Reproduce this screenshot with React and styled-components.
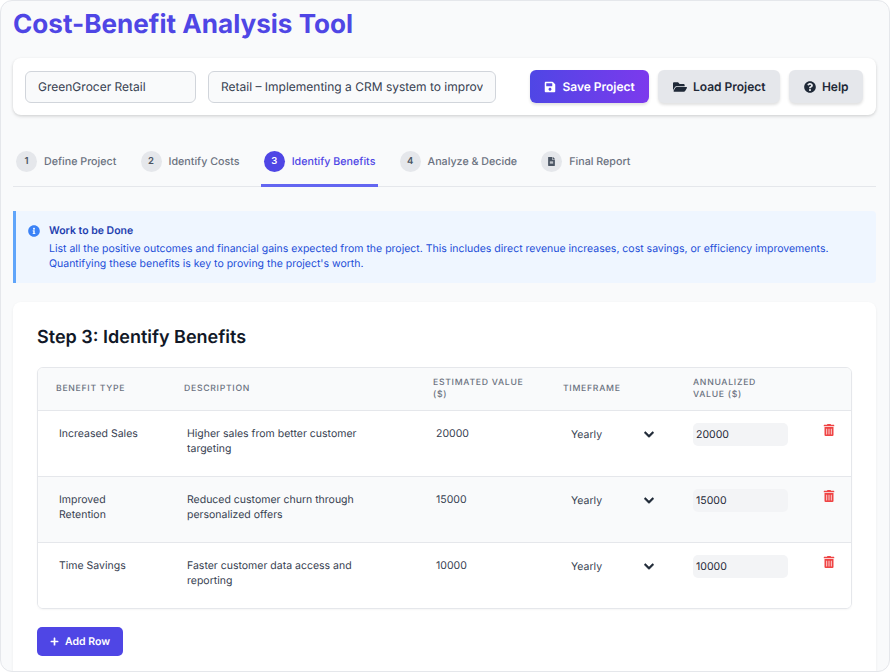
import React from 'react';
import styled, { createGlobalStyle } from 'styled-components';
import {
  FaSave,
  FaFolderOpen,
  FaQuestionCircle,
  FaFileAlt,
  FaInfoCircle,
  FaChevronDown,
  FaTrashAlt,
  FaPlus,
} from 'react-icons/fa';

const GlobalStyle = createGlobalStyle`
  * { box-sizing: border-box; text-rendering: geometricPrecision; }
  html, body { margin: 0; background: #fff; }
  body { font-family: Inter, "Liberation Sans", sans-serif; }
`;

const Frame = styled.div`
  width: 890px;
  height: 672px;
  overflow: hidden;
  background: #f9fafb;
  border: 1px solid #e5e7eb;
  border-radius: 12px;
  padding: 0 13px 0 12px;
`;

const Title = styled.h1`
  margin: 7px 0 17px;
  height: 33px;
  font-size: 26.1px;
  line-height: 33px;
  font-weight: 700;
  color: #4f46e5;
`;

const Toolbar = styled.div`
  display: flex;
  align-items: center;
  height: 57px;
  padding: 0 12px;
  background: #fff;
  border-radius: 8px;
  box-shadow: 0 1px 3px rgba(0, 0, 0, 0.12), 0 2px 4px rgba(0, 0, 0, 0.06);
`;

const ProjectInput = styled.input`
  flex: none;
  width: ${({ $width }) => $width}px;
  height: 32px;
  margin-right: 12px;
  padding: 0 12px;
  font: 400 12px Inter, sans-serif;
  color: #374151;
  background: #f9fafb;
  border: 1px solid #d1d5db;
  border-radius: 6px;
  outline: none;
`;

const Actions = styled.div`
  display: flex;
  flex: none;
  gap: 9px;
  margin-left: 22px;
`;

const Button = styled.button`
  display: flex;
  flex: none;
  align-items: center;
  gap: 6px;
  height: 33px;
  padding: 0 ${({ $primary }) => ($primary ? 14.4 : 14.7)}px;
  white-space: nowrap;
  font: 600 12px Inter, sans-serif;
  border: 0;
  border-radius: 6px;
  color: ${({ $primary }) => ($primary ? '#fff' : '#1f2937')};
  background: ${({ $primary }) =>
    $primary ? 'linear-gradient(90deg, #4f46e5, #7c3aed)' : '#e5e7eb'};
  box-shadow: 0 2px 3px rgba(0, 0, 0, 0.12);
`;

const Tabs = styled.nav`
  display: flex;
  height: 47px;
  margin-top: 25px;
  margin-bottom: 24px;
  border-bottom: 1px solid #e5e7eb;
`;

const Tab = styled.div`
  display: flex;
  align-items: center;
  gap: 7px;
  height: 47px;
  padding: 0 3px 1px;
  margin-right: 18.2px;
  font-size: 10.7px;
  font-weight: 500;
  color: ${({ $active }) => ($active ? '#4f46e5' : '#6b7280')};
  border-bottom: 3px solid ${({ $active }) => ($active ? '#6366f1' : 'transparent')};
`;

const StepDot = styled.span`
  display: flex;
  align-items: center;
  justify-content: center;
  width: 21px;
  height: 21px;
  border-radius: 50%;
  font-size: 9.5px;
  font-weight: 600;
  color: ${({ $active }) => ($active ? '#fff' : '#4b5563')};
  background: ${({ $active }) => ($active ? '#4f46e5' : '#e5e7eb')};
`;

const InfoBox = styled.div`
  display: flex;
  gap: 9px;
  height: 72px;
  padding: 13px 12px;
  background: #eff6ff;
  border-left: 3px solid #60a5fa;
  border-radius: 0 4px 4px 0;
`;

const InfoIcon = styled(FaInfoCircle)`
  flex: none;
  width: 12px;
  height: 12px;
  margin-top: 1px;
  color: #3b82f6;
`;

const InfoTitle = styled.div`
  font-size: 10.5px;
  line-height: 14px;
  font-weight: 600;
  color: #1e40af;
`;

const InfoText = styled.p`
  margin: 3px 0 0;
  font-size: 10.5px;
  line-height: 15px;
  color: #1d4ed8;
`;

const Card = styled.section`
  height: 400px;
  margin-top: 19px;
  padding: 24px;
  background: #fff;
  border-radius: 8px;
  box-shadow: 0 1px 3px rgba(0, 0, 0, 0.06);
`;

const CardTitle = styled.h2`
  margin: 0 0 18px;
  height: 23px;
  font-size: 18px;
  line-height: 23px;
  font-weight: 600;
  color: #111827;
`;

const TableWrap = styled.div`
  width: 815px;
  border: 1px solid #e5e7eb;
  border-radius: 6px;
  overflow: hidden;
  box-shadow: 0 1px 2px rgba(0, 0, 0, 0.04);
`;

const Table = styled.table`
  width: 100%;
  table-layout: fixed;
  border-collapse: separate;
  border-spacing: 0;
`;

const Th = styled.th`
  height: 43px;
  padding: 0 18px;
  font-size: 8.7px;
  line-height: 12px;
  font-weight: 500;
  letter-spacing: 0.7px;
  text-align: left;
  text-transform: uppercase;
  color: #6b7280;
  background: #f9fafb;
  border-bottom: 1px solid #e5e7eb;
`;

const Tr = styled.tr`
  background: ${({ $shaded }) => ($shaded ? '#f9fafb' : '#fff')};
  &:not(:last-child) td { border-bottom: 1px solid #e5e7eb; }
`;

const Td = styled.td`
  height: 66px;
  padding: 12px 18px;
  vertical-align: top;
  ${Tr}:last-child & { height: 65px; }
`;

const CellText = styled.textarea`
  display: block;
  width: 100%;
  height: 36px;
  padding: 3px;
  margin: 0;
  resize: none;
  overflow: hidden;
  font: 400 10.5px/15px Inter, sans-serif;
  color: #374151;
  background: transparent;
  border: 0;
  outline: none;
`;

const SelectWrap = styled.div`
  position: relative;
  width: 100px;
`;

const Select = styled.select`
  appearance: none;
  display: block;
  width: 100%;
  height: 23px;
  padding: 0 8px;
  font: 400 10.5px Inter, sans-serif;
  color: #374151;
  background: transparent;
  border: 0;
  outline: none;
`;

const Chevron = styled(FaChevronDown)`
  position: absolute;
  top: 6px;
  right: 9px;
  width: 10px;
  height: 11px;
  color: #1f2937;
  stroke: currentColor;
  stroke-width: 24;
  pointer-events: none;
`;

const ValueInput = styled.input`
  display: block;
  width: 95px;
  height: 23px;
  padding: 0 3px;
  font: 400 10.5px Inter, sans-serif;
  color: #1f2937;
  background: #f3f4f6;
  border: 0;
  border-radius: 5px;
  outline: none;
`;

const DeleteButton = styled.button`
  display: block;
  padding: 0;
  margin-top: 1px;
  background: none;
  border: 0;
  color: #ef4444;
  line-height: 0;
`;

const AddButton = styled.button`
  display: flex;
  align-items: center;
  gap: 6px;
  height: 29px;
  margin-top: 18px;
  padding: 0 13px;
  font: 600 10.5px Inter, sans-serif;
  color: #fff;
  background: #4f46e5;
  border: 0;
  border-radius: 5px;
`;

const steps = [
  { n: '1', label: 'Define Project' },
  { n: '2', label: 'Identify Costs' },
  { n: '3', label: 'Identify Benefits', active: true },
  { n: '4', label: 'Analyze & Decide' },
  { n: <FaFileAlt size={9} />, label: 'Final Report' },
];

const rows = [
  { type: 'Increased Sales', desc: 'Higher sales from better customer targeting', value: '20000' },
  { type: 'Improved Retention', desc: 'Reduced customer churn through personalized offers', value: '15000' },
  { type: 'Time Savings', desc: 'Faster customer data access and reporting', value: '10000' },
];

const columns = [
  { label: 'Benefit Type', width: 128 },
  { label: 'Description', width: 249 },
  { label: 'Estimated Value ($)', width: 130 },
  { label: 'Timeframe', width: 130 },
  { label: 'Annualized Value ($)', width: 130 },
  { label: '', width: 46 },
];

export default function App() {
  return (
    <Frame>
      <GlobalStyle />
      <Title>Cost-Benefit Analysis Tool</Title>

      <Toolbar>
        <ProjectInput $width={171} defaultValue="GreenGrocer Retail" />
        <ProjectInput $width={288} defaultValue="Retail – Implementing a CRM system to improve customer retention" />
        <Actions>
          <Button $primary><FaSave size={12} />Save Project</Button>
          <Button><FaFolderOpen size={14} />Load Project</Button>
          <Button><FaQuestionCircle size={12} />Help</Button>
        </Actions>
      </Toolbar>

      <Tabs>
        {steps.map((s) => (
          <Tab key={s.label} $active={s.active}>
            <StepDot $active={s.active}>{s.n}</StepDot>
            <span>{s.label}</span>
          </Tab>
        ))}
      </Tabs>

      <InfoBox>
        <InfoIcon />
        <div>
          <InfoTitle>Work to be Done</InfoTitle>
          <InfoText>
            List all the positive outcomes and financial gains expected from the project. This includes direct revenue increases, cost savings, or efficiency improvements.
            <br />
            Quantifying these benefits is key to proving the project's worth.
          </InfoText>
        </div>
      </InfoBox>

      <Card>
        <CardTitle>Step 3: Identify Benefits</CardTitle>
        <TableWrap>
          <Table>
            <colgroup>
              {columns.map((c) => <col key={c.label} width={c.width} />)}
            </colgroup>
            <thead>
              <tr>
                {columns.map((c) => <Th key={c.label}>{c.label}</Th>)}
              </tr>
            </thead>
            <tbody>
              {rows.map((r, i) => (
                <Tr key={r.type} $shaded={i === 1}>
                  <Td><CellText defaultValue={r.type} /></Td>
                  <Td><CellText defaultValue={r.desc} /></Td>
                  <Td><CellText defaultValue={r.value} /></Td>
                  <Td>
                    <SelectWrap>
                      <Select defaultValue="Yearly">
                        <option>Yearly</option>
                        <option>Monthly</option>
                        <option>One-time</option>
                      </Select>
                      <Chevron />
                    </SelectWrap>
                  </Td>
                  <Td><ValueInput defaultValue={r.value} /></Td>
                  <Td>
                    <DeleteButton aria-label="Delete row"><FaTrashAlt size={12} /></DeleteButton>
                  </Td>
                </Tr>
              ))}
            </tbody>
          </Table>
        </TableWrap>
        <AddButton><FaPlus size={9} />Add Row</AddButton>
      </Card>
    </Frame>
  );
}
